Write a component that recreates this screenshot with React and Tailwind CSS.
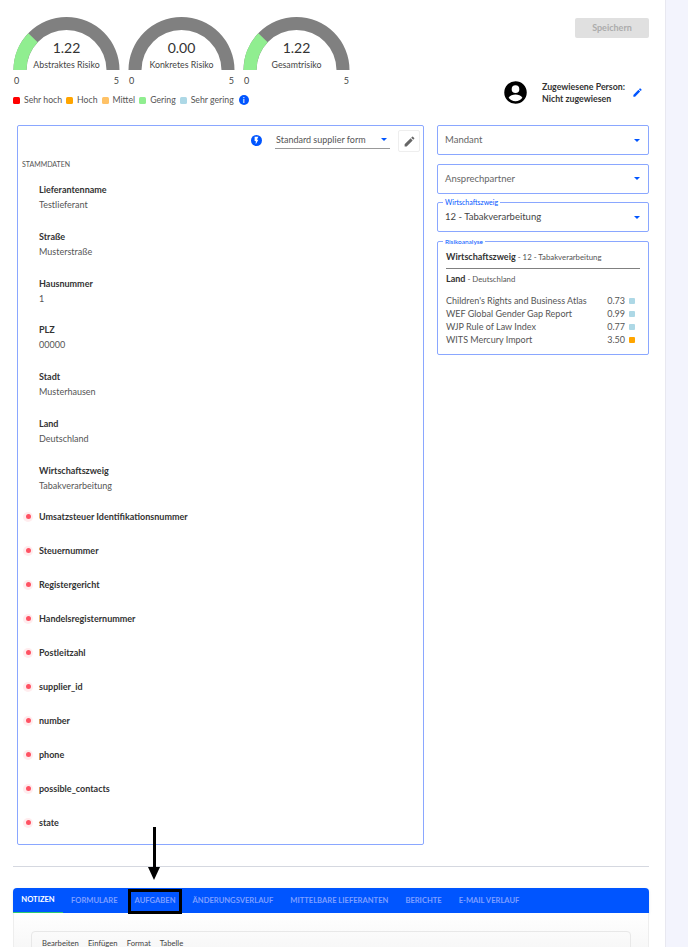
import React from "react";

const font = { fontFamily: '"Lato", "Noto Sans", sans-serif' };

function Gauge({ value, label, green }) {
  const a = Math.PI * (1 - green);
  const cx = 53.5, cy = 53, R = 53, r = 40;
  const ox = cx + R * Math.cos(a), oy = cy - R * Math.sin(a);
  const ix = cx + r * Math.cos(a), iy = cy - r * Math.sin(a);
  return (
    <div className="w-[107px]">
      <div className="relative h-[53px] w-[107px]">
        <svg width="107" height="53" viewBox="0 0 107 53" className="block">
          <path d={`M0.5 53A53 53 0 0 1 106.5 53H93.5A40 40 0 0 0 13.5 53Z`} fill="#808080" />
          {green > 0 && <path d={`M0.5 53A53 53 0 0 1 ${ox} ${oy}L${ix} ${iy}A40 40 0 0 0 13.5 53Z`} fill="#90ee90" />}
        </svg>
        <div className="absolute left-0 right-0 top-[21.500px] text-center text-[14px] leading-[17px] text-[#333]">{value}</div>
        <div className="absolute left-0 right-0 top-[41.500px] text-center text-[8.800px] leading-[12px] text-[#444]">{label}</div>
      </div>
      <div className="mt-[5px] flex justify-between px-px text-[9px] leading-[12px] text-[#444]">
        <span>0</span>
        <span>5</span>
      </div>
    </div>
  );
}

function Legend({ color, label }) {
  return (
    <div className="flex items-center gap-[4px]">
      <span className={`h-[7px] w-[7px] rounded-[1.5px] ${color}`} />
      <span className="text-[8.700px] leading-[12px] text-[#555]">{label}</span>
    </div>
  );
}

function Caret() {
  return <span className="h-0 w-0 border-x-[3.5px] border-t-[3.5px] border-x-transparent border-t-[#0055ff]" />;
}

function Pencil({ className, color }) {
  return (
    <svg viewBox="0 0 24 24" className={className} fill={color}>
      <path d="M3 17.25V21h3.75L17.81 9.94l-3.75-3.75L3 17.25zM20.71 7.04a1 1 0 0 0 0-1.41l-2.34-2.34a1 1 0 0 0-1.41 0l-1.83 1.83 3.75 3.75 1.83-1.83z" />
    </svg>
  );
}

function Field({ label, value }) {
  return (
    <div className="h-[46.8px] pl-[21px]">
      <div className="text-[9px] font-bold leading-[12px] text-[#333]">{label}</div>
      <div className="mt-[3px] text-[9px] leading-[12px] text-[#555]">{value}</div>
    </div>
  );
}

function Missing({ label }) {
  return (
    <div className="relative flex h-[34px] items-center pl-[21px]">
      <span className="absolute left-[5px] flex h-[10px] w-[10px] items-center justify-center rounded-full bg-[#ffecee]">
        <span className="h-[5px] w-[5px] rounded-full bg-[#ff5263]" />
      </span>
      <span className="text-[9px] font-bold leading-[12px] text-[#333]">{label}</span>
    </div>
  );
}

function Select({ label, children, muted }) {
  return (
    <div className="relative flex h-[30px] items-center justify-between rounded-[2px] border border-[#8aa7ff] pl-[7px] pr-[8px]">
      {label && (
        <span className="absolute left-[5px] top-[-5px] bg-white px-[2px] text-[7px] leading-[9px] text-[#0055ff]">{label}</span>
      )}
      <span className={`text-[9.500px] leading-[12px] ${muted ? "text-[#666]" : "text-[#444]"}`}>{children}</span>
      <Caret />
    </div>
  );
}

function Score({ name, value, color }) {
  return (
    <div className="flex h-[13px] items-center text-[9px] text-[#555]">
      <span className="flex-1">{name}</span>
      <span className="mr-[3.500px]">{value}</span>
      <span className={`h-[6.500px] w-[6.500px] rounded-[1px] ${color}`} />
    </div>
  );
}

export default function App() {
  return (
    <div style={font} className="relative flex h-[947px] w-[688px] overflow-hidden bg-white">
      <main className="w-[665px] shrink-0 pl-[13px] pr-[16px]">
        <div className="flex h-[125px] pt-[17px]">
          <div>
            <div className="flex gap-[8px]">
              <Gauge value="1.22" label="Abstraktes Risiko" green={0.244} />
              <Gauge value="0.00" label="Konkretes Risiko" green={0} />
              <Gauge value="1.22" label="Gesamtrisiko" green={0.244} />
            </div>
            <div className="mt-[7px] flex items-center gap-[4px]">
              <Legend color="bg-[#ff0000]" label="Sehr hoch" />
              <Legend color="bg-[#ffa500]" label="Hoch" />
              <Legend color="bg-[#ffc266]" label="Mittel" />
              <Legend color="bg-[#90ee90]" label="Gering" />
              <Legend color="bg-[#add8e6]" label="Sehr gering" />
              <span className="ml-[1px] flex h-[10px] w-[10px] items-center justify-center rounded-full bg-[#0055ff] text-[7px] font-bold leading-none text-white">i</span>
            </div>
          </div>
          <div className="flex flex-1 flex-col items-end">
            <button className="mt-[1px] h-[20px] w-[74px] rounded-[2px] bg-[#e0e0e0] text-[9px] font-bold text-[#acacac]">Speichern</button>
            <div className="mt-[41px] flex items-center">
              <svg viewBox="0 0 24 24" className="h-[27px] w-[27px]" fill="#000">
                <path d="M12 2a10 10 0 1 0 0 20 10 10 0 0 0 0-20zm0 3.6a3.4 3.4 0 1 1 0 6.8 3.4 3.4 0 0 1 0-6.8zm0 14.2a7.6 7.6 0 0 1-6.1-3.1c1-1.9 3.9-2.9 6.1-2.9s5.100 1 6.100 2.900a7.600 7.600 0 0 1-6.100 3.100z" />
              </svg>
              <div className="ml-[13px] w-[84px] text-[8.800px] font-bold leading-[11.5px] text-[#333]">
                <div>Zugewiesene Person:</div>
                <div>Nicht zugewiesen</div>
              </div>
              <Pencil className="ml-[6px] mr-[6px] h-[11px] w-[11px]" color="#0055ff" />
            </div>
          </div>
        </div>

        <div className="flex h-[720px] gap-[13px] pl-[4px]">
          <section className="relative w-[407px] shrink-0 rounded-[2px] border border-[#8aa7ff]">
            <div className="flex h-[26px] items-start justify-end pr-[3px] pt-[4px]">
              <span className="mr-[13px] mt-[5px] flex h-[11px] w-[11px] items-center justify-center rounded-full bg-[#0055ff]">
                <svg viewBox="0 0 24 24" className="h-[9px] w-[9px]" fill="#fff"><path d="M7 2v11h3v9l7-12h-4l4-8z" /></svg>
              </span>
              <div className="mr-[8px] flex h-[19px] w-[115px] items-center justify-between border-b border-[#999] pl-[1px] pr-[3px] pt-px">
                <span className="text-[9px] leading-[12px] text-[#555]">Standard supplier form</span>
                <Caret />
              </div>
              <div className="flex h-[22px] w-[22px] items-center justify-center rounded-[2px] border border-[#eee]">
                <Pencil className="h-[13px] w-[13px]" color="#666" />
              </div>
            </div>
            <div className="mt-[8px] pl-[4px] text-[7px] leading-[9px] text-[#555]">STAMMDATEN</div>
            <div className="mt-[15px]">
              <Field label="Lieferantenname" value="Testlieferant" />
              <Field label="Straße" value="Musterstraße" />
              <Field label="Hausnummer" value="1" />
              <Field label="PLZ" value="00000" />
              <Field label="Stadt" value="Musterhausen" />
              <Field label="Land" value="Deutschland" />
              <Field label="Wirtschaftszweig" value="Tabakverarbeitung" />
            </div>
            <div className="-mt-[12px]">
              <Missing label="Umsatzsteuer Identifikationsnummer" />
              <Missing label="Steuernummer" />
              <Missing label="Registergericht" />
              <Missing label="Handelsregisternummer" />
              <Missing label="Postleitzahl" />
              <Missing label="supplier_id" />
              <Missing label="number" />
              <Missing label="phone" />
              <Missing label="possible_contacts" />
              <Missing label="state" />
            </div>
          </section>

          <aside className="flex w-[212px] shrink-0 flex-col gap-[8.500px]">
            <Select muted>Mandant</Select>
            <Select muted>Ansprechpartner</Select>
            <Select label="Wirtschaftszweig">12 - Tabakverarbeitung</Select>
            <div className="relative h-[114px] rounded-[2px] border border-[#8aa7ff] px-[8px] pt-[9px]">
              <span className="absolute left-[5px] top-[-4px] bg-white px-[2px] text-[6.500px] leading-[8px] text-[#0055ff]">Risikoanalyse</span>
              <div className="border-b border-[#808080] pb-[5px] text-[7.800px] leading-[12px] text-[#555]">
                <span className="text-[9px] font-bold text-[#333]">Wirtschaftszweig</span> - 12 - Tabakverarbeitung
              </div>
              <div className="mt-[4px] text-[7.800px] leading-[12px] text-[#555]">
                <span className="text-[9px] font-bold text-[#333]">Land</span> - Deutschland
              </div>
              <div className="mt-[10px] pr-[5px]">
                <Score name="Children's Rights and Business Atlas" value="0.73" color="bg-[#add8e6]" />
                <Score name="WEF Global Gender Gap Report" value="0.99" color="bg-[#add8e6]" />
                <Score name="WJP Rule of Law Index" value="0.77" color="bg-[#add8e6]" />
                <Score name="WITS Mercury Import" value="3.50" color="bg-[#ffa500]" />
              </div>
            </div>
          </aside>
        </div>

        <div className="mt-[21px] border-t border-[#d5d8e0]" />

        <div className="mt-[21px] flex h-[25px] items-stretch gap-[17px] rounded-t-[4px] bg-[#0055ff] text-[7.600px] font-bold text-[#7f9fff] shadow">
          <div className="-mr-[9px] flex w-[50px] items-center justify-center border-b border-[#2ecc71] text-white">NOTIZEN</div>
          <div className="flex items-center">FORMULARE</div>
          <div className="relative flex items-center">
            AUFGABEN
            <span className="absolute -left-[7px] -right-[6px] bottom-[-1px] top-px border-[3px] border-black" />
          </div>
          <div className="flex items-center">ÄNDERUNGSVERLAUF</div>
          <div className="flex items-center">MITTELBARE LIEFERANTEN</div>
          <div className="flex items-center">BERICHTE</div>
          <div className="flex items-center">E-MAIL VERLAUF</div>
        </div>
        <div className="h-[60px] border-x border-[#eee] bg-gradient-to-b from-white to-[#f2f2f2] px-[17px] pt-[18px]">
          <div className="flex h-[60px] gap-[9px] rounded-[4px] border border-[#e8e8e8] pl-[10px] pt-[6px] text-[7.700px] leading-[10px] text-[#444]">
            <span>Bearbeiten</span>
            <span>Einfügen</span>
            <span>Format</span>
            <span>Tabelle</span>
          </div>
        </div>
      </main>
      <div className="flex-1 border-l border-[#e8e8f0] bg-[#f3f4fd]" />

      <div className="absolute left-[153px] top-[827px] h-[42px] w-[2.500px] bg-black" />
      <div className="absolute left-[148px] top-[867px] h-0 w-0 border-x-[6.500px] border-t-[13px] border-x-transparent border-t-black" />
    </div>
  );
}
